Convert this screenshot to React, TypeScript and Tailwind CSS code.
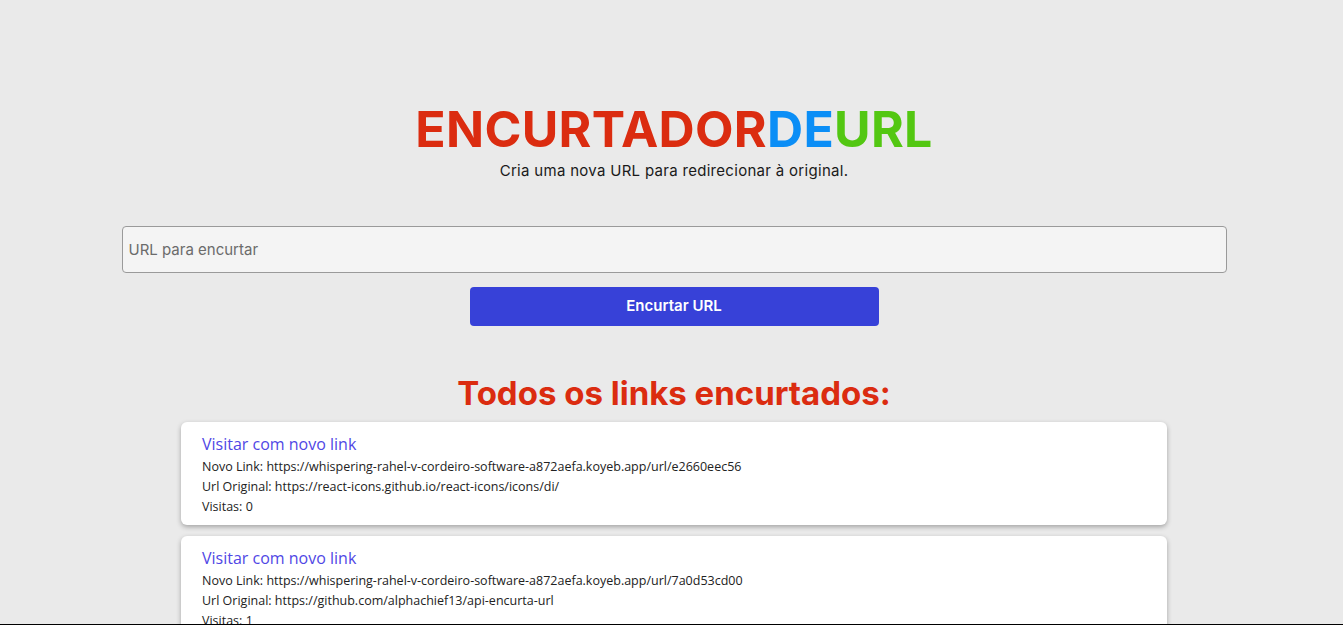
import { useState } from 'react';

type ShortLink = {
  id: string;
  original: string;
  visits: number;
};

const BASE = 'https://whispering-rahel-v-cordeiro-software-a872aefa.koyeb.app/url/';

const links: ShortLink[] = [
  { id: 'e2660eec56', original: 'https://react-icons.github.io/react-icons/icons/di/', visits: 0 },
  { id: '7a0d53cd00', original: 'https://github.com/alphachief13/api-encurta-url', visits: 1 },
];

export default function App() {
  const [url, setUrl] = useState('');

  return (
    <div className="min-h-screen bg-[#eaeaea] pl-[5px] font-['Inter',sans-serif]">
      <header className="flex flex-col items-center pt-[103px]">
        <h1 className="text-[50px] leading-[52px] font-bold tracking-[0.3px]">
          <span className="text-[#db2c10]">ENCURTADOR</span>
          <span className="text-[#0b8ef6]">DE</span>
          <span className="text-[#53c712]">URL</span>
        </h1>
        <p className="mt-[5px] text-[15px] tracking-[0.3px] text-[#1a1a1a]">Cria uma nova URL para redirecionar à original.</p>
      </header>

      <form
        className="mt-[43px] flex flex-col items-center gap-[14px]"
        onSubmit={(e) => e.preventDefault()}
      >
        <input
          value={url}
          onChange={(e) => setUrl(e.target.value)}
          placeholder="URL para encurtar"
          className="w-[1105px] h-[47px] rounded-[4px] border border-[#9a9a9a] bg-[#f4f4f4] px-[6px] text-[15px] text-[#333] placeholder:text-[#6b6b6b] outline-none"
        />
        <button className="w-[409px] h-[39px] rounded-[4px] bg-[#3741d8] text-[15px] font-semibold text-white">
          Encurtar URL
        </button>
      </form>

      <h2 className="mt-[47px] text-center text-[33px] leading-[40px] font-bold text-[#db2c10]">
        Todos os links encurtados:
      </h2>

      <div className="mt-[9px] flex flex-col items-center gap-[11px] font-['Open_Sans',sans-serif]">
        {links.map((link) => (
          <div
            key={link.id}
            className="w-[986px] rounded-[6px] bg-white px-[21px] pt-[12px] pb-[8px] shadow-[0_2px_5px_rgba(0,0,0,0.3)]"
          >
            <a href="#" className="block text-[16px] leading-[20px] text-[#5047e5]">
              Visitar com novo link
            </a>
            <div className="mt-[3px] text-[12.5px] leading-[20px] text-[#222]">
              <p>Novo Link: {BASE + link.id}</p>
              <p>Url Original: {link.original}</p>
              <p>Visitas: {link.visits}</p>
            </div>
          </div>
        ))}
      </div>

      <div className="fixed bottom-0 left-0 right-0 h-px bg-black" />
    </div>
  );
}
